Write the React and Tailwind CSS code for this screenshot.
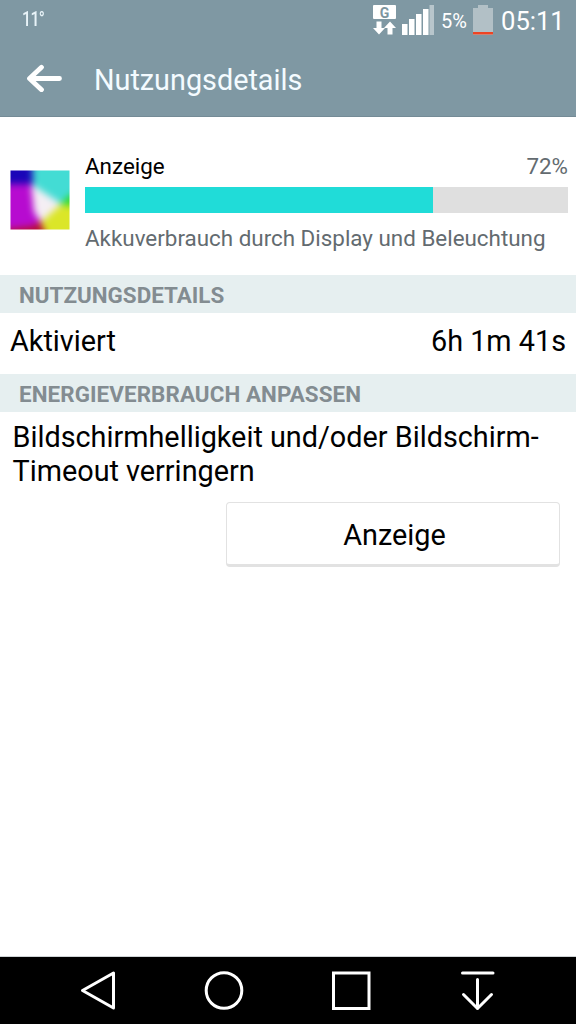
function StatusBar() {
    return (
        <div className="flex h-10 items-center justify-between pl-[22px] pr-3">
            <span className="origin-left scale-x-[0.82] text-[19.500px] leading-10 font-medium tracking-[-0.8px] text-[#e8f3f8]">11°</span>
            <div className="flex items-center">
                <div className="flex w-[23px] flex-col items-center">
                    <div className="flex h-[14px] w-[23px] items-center justify-center rounded-[1px] bg-white pt-[1px] text-[14px] leading-none font-bold text-[#7d95a0]">G</div>
                    <svg className="mt-[2px] h-[14px] w-[23px]" viewBox="0 0 23 14" fill="white">
                        <path d="M3.500.5h5V7H12L6 13.500 0 7h3.500z" />
                        <path d="M14.500 13.500h5V7H23L17 .5 11 7h3.500z" />
                    </svg>
                </div>
                <svg className="ml-[6px] h-[30px] w-8" viewBox="0 0 32 30" fill="white">
                    <rect x="0" y="19" width="5.500" height="11" />
                    <rect x="7" y="14" width="5.500" height="16" />
                    <rect x="14" y="9" width="5.500" height="21" />
                    <rect x="21" y="4" width="5.500" height="26" />
                    <rect x="27.500" y="0" width="4.500" height="30" fillOpacity="0.45" />
                </svg>
                <span className="ml-[7px] w-[26px] pt-[2px] text-[20px] leading-10 text-white">5%</span>
                <svg className="ml-[6px] h-[30px] w-5" viewBox="0 0 20 30">
                    <path d="M0 3h5V0h10v3h5v27H0z" fill="#b2c0c6" />
                    <rect y="27" width="20" height="2.500" fill="#ee4423" />
                </svg>
                <span className="ml-2 w-[63px] pt-[2px] text-[25.6px] leading-10 text-white">05:11</span>
            </div>
        </div>
    )
}

function Header() {
    return (
        <header className="h-[117px] border-b border-[#748b96] bg-[#7f98a3]">
            <StatusBar />
            <div className="flex h-[76px] items-center pl-[27px]">
                <svg className="h-7 w-[35px]" viewBox="0 0 35 28" fill="none" stroke="white" strokeWidth="4.800" strokeLinecap="round" strokeLinejoin="round">
                    <path d="M32.500 14.500H3M14.500 3.300L2.500 14.500l12 11.200" />
                </svg>
                <h1 className="ml-8 pt-[3px] text-[28.8px] leading-9 text-[#f4fbff]">Nutzungsdetails</h1>
            </div>
        </header>
    )
}

function DisplayIcon() {
    return (
        <svg className="mt-[53px] h-[60px] w-[60px] shrink-0" viewBox="0 0 60 60">
            <defs>
                <filter id="soft" x="-20%" y="-20%" width="140%" height="140%" colorInterpolationFilters="sRGB">
                    <feGaussianBlur stdDeviation="3.600" />
                </filter>
                <clipPath id="frame">
                    <rect x="0.500" y="0.500" width="59" height="59" />
                </clipPath>
            </defs>
            <g clipPath="url(#frame)">
                <g filter="url(#soft)">
                    <rect x="-15" y="-15" width="90" height="90" fill="#b70bd0" />
                    <path d="M-15-15h38v29H-15z" fill="#1a05b8" />
                    <path d="M22-15h53v55H53L23 17z" fill="#43dcd4" />
                    <path d="M75 20L60 25 49 35l26 10z" fill="#2fdb2a" />
                    <path d="M21 14L53 35 33 55 24 42z" fill="#f4eef4" />
                    <path d="M50 35L75 36V75H38L31 52z" fill="#dbe628" />
                    <path d="M-15 61L24 56 30 51 40 75H-15z" fill="#b8102c" />
                </g>
            </g>
        </svg>
    )
}

function SectionTitle({ children }) {
    return (
        <h2 className="h-[38px] bg-[#e6eff0] pl-[19px] text-[22.4px] leading-[40px] font-bold text-[#838c91]">{children}</h2>
    )
}

function NavBar() {
    return (
        <nav className="flex h-[68px] items-center border-t border-[#cfd4d6] bg-black pl-[79px]">
            <svg className="h-11 w-[38px]" viewBox="0 0 38 44" fill="none" stroke="white" strokeWidth="3" strokeLinejoin="round">
                <path d="M3.500 21.500L34.500 4V39z" />
            </svg>
            <svg className="ml-[85px] h-11 w-11" viewBox="0 0 44 44" fill="none" stroke="white" strokeWidth="3">
                <circle cx="22" cy="21.500" r="17.800" />
            </svg>
            <svg className="ml-[83px] h-11 w-11" viewBox="0 0 44 44" fill="none" stroke="white" strokeWidth="3">
                <rect x="4.500" y="4" width="35.500" height="35.500" />
            </svg>
            <svg className="ml-[82px] h-11 w-11" viewBox="0 0 44 44" fill="none" stroke="white" strokeWidth="3" strokeLinecap="round" strokeLinejoin="round">
                <path d="M7.500 4H38M22.500 10.500V39.500M8.500 25.500l14 14 14-14" />
            </svg>
        </nav>
    )
}

export default function App() {
    return (
        <div className="flex h-[1024px] w-[576px] flex-col overflow-hidden bg-white font-['Roboto',sans-serif] text-black">
            <Header />
            <main className="flex-1">
                <section className="flex h-[158px] pl-[10px] pr-2">
                    <DisplayIcon />
                    <div className="ml-[15px] flex-1 pt-9 text-[22.4px] leading-[26px]">
                        <div className="flex justify-between">
                            <span>Anzeige</span>
                            <span className="text-[#636b70]">72%</span>
                        </div>
                        <div className="mt-2 h-[26px] bg-[#dfdfdf]">
                            <div className="h-full w-[72%] bg-[#20dcd8]"></div>
                        </div>
                        <p className="mt-3 whitespace-nowrap text-[#636b70]">Akkuverbrauch durch Display und Beleuchtung</p>
                    </div>
                </section>
                <SectionTitle>NUTZUNGSDETAILS</SectionTitle>
                <div className="flex h-[61px] justify-between px-[10px] pt-[11px] text-[28.8px] leading-[34px]">
                    <span>Aktiviert</span>
                    <span>6h 1m 41s</span>
                </div>
                <SectionTitle><span className="tracking-[0.08px]">ENERGIEVERBRAUCH ANPASSEN</span></SectionTitle>
                <p className="pt-[8px] pl-[12.500px] text-[28.8px] leading-[34px]">
                    Bildschirmhelligkeit und/oder Bildschirm-<br />Timeout verringern
                </p>
                <div className="mt-[14px] flex justify-end pr-4">
                    <button className="h-[65px] w-[334px] rounded-[4px] border-[1.5px] border-b-3 border-[#e2e2e2] pt-[3px] pl-[3px] text-[28.8px] leading-[34px]">Anzeige</button>
                </div>
            </main>
            <NavBar />
        </div>
    )
}
